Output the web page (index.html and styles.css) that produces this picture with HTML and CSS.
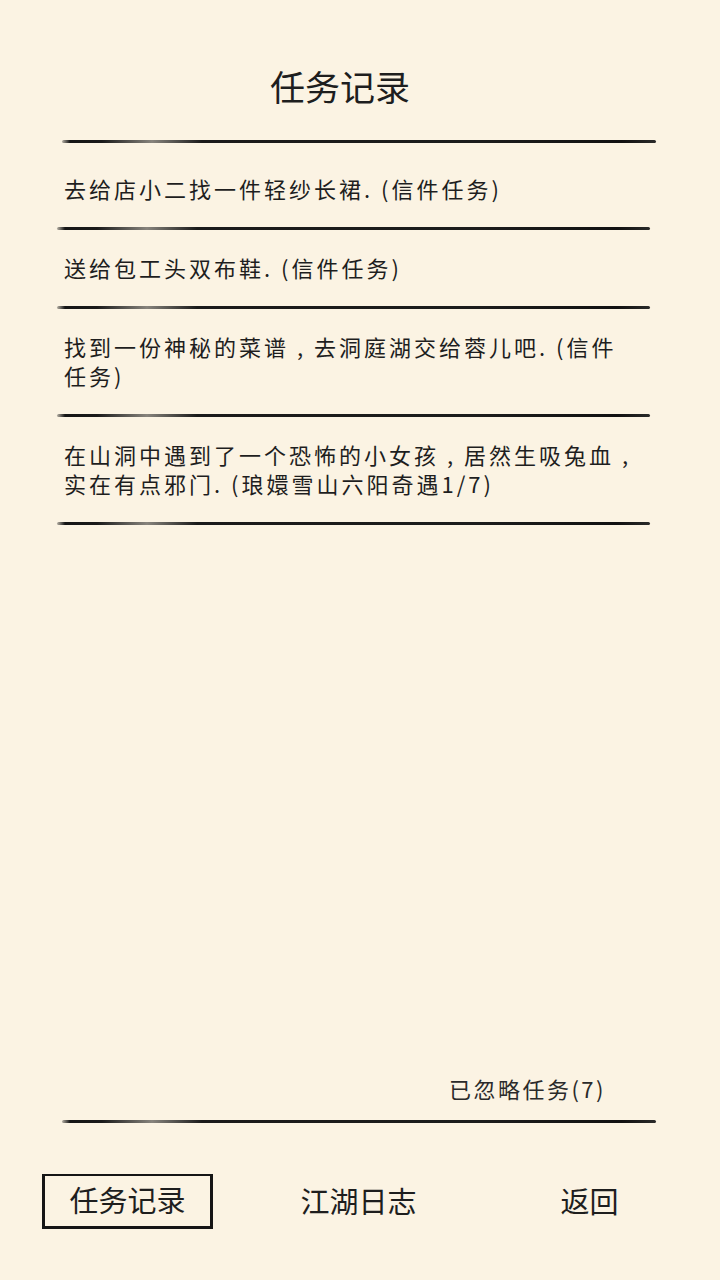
FILE: index.html
```html
<!DOCTYPE html>
<html lang="zh-CN">
<head>
    <meta charset="UTF-8">
    <meta name="viewport" content="width=device-width, initial-scale=1.0">
    <title>任务记录</title>
    <link rel="stylesheet" href="styles.css">
</head>
<body>
    <div class="screen">
        <h1 class="title">任务记录</h1>
        <div class="brush brush-wide"></div>

        <ul class="quests">
            <li class="quest">去给店小二找一件轻纱长裙. (信件任务)</li>
            <li class="brush"></li>
            <li class="quest">送给包工头双布鞋. (信件任务)</li>
            <li class="brush"></li>
            <li class="quest">找到一份神秘的菜谱 , 去洞庭湖交给蓉儿吧. (信件任务)</li>
            <li class="brush"></li>
            <li class="quest">在山洞中遇到了一个恐怖的小女孩 , 居然生吸兔血 , 实在有点邪门. (琅嬛雪山六阳奇遇1/7)</li>
            <li class="brush"></li>
        </ul>

        <div class="ignored">已忽略任务(7)</div>
        <div class="brush brush-wide"></div>

        <nav class="tabs">
            <button class="tab active">任务记录</button>
            <button class="tab">江湖日志</button>
            <button class="tab">返回</button>
        </nav>
    </div>
</body>
</html>
```

FILE: styles.css
```css
/* Reset and base styles */
* {
    box-sizing: border-box;
    margin: 0;
    padding: 0;
}

body {
    background-color: #fbf3e3;
    color: #1e1e1e;
    font-family: 'Noto Sans CJK SC', 'Noto Sans', sans-serif;
}

.screen {
    width: 720px;
    height: 1280px;
    display: flex;
    flex-direction: column;
}

/* Header */
.title {
    font-size: 35px;
    font-weight: normal;
    line-height: 48px;
    text-align: center;
    margin: 62px 40px 0 0;
}

/* Ink brush divider */
.brush {
    list-style: none;
    height: 3px;
    margin-left: 57px;
    width: 593px;
    border-radius: 2px;
    background: linear-gradient(to right,
        rgba(20, 20, 20, 0.3) 0,
        #151515 8px,
        #1a1a1a 40px,
        rgba(40, 40, 40, 0.55) 90px,
        #1a1a1a 140px,
        #1c1c1c 420px,
        #111 560px,
        #2a2a2a 100%);
}

.brush-wide {
    margin-left: 62px;
    width: 594px;
}

.title + .brush {
    margin-top: 30px;
}

/* Quest list */
.quests {
    list-style: none;
    padding-top: 8px;
}

.quest {
    font-size: 22px;
    line-height: 29px;
    letter-spacing: 3px;
    padding: 23px 84px 24px 64px;
}

.ignored {
    margin-top: auto;
    font-size: 22px;
    line-height: 30px;
    letter-spacing: 2.5px;
    color: #2a2a2a;
    text-align: right;
    padding-right: 114px;
    margin-bottom: 17px;
}

/* Bottom tabs */
.tabs {
    display: flex;
    align-items: center;
    margin: 51px 0 51px 42px;
}

.tab {
    background: none;
    border: none;
    font-family: inherit;
    font-size: 29px;
    line-height: 40px;
    color: #1e1e1e;
    width: 171px;
    height: 55px;
    padding-bottom: 4px;
    text-align: center;
}

.tab.active {
    border: 3px solid #151515;
    border-top-width: 2px;
}

.tab + .tab {
    margin-left: 60px;
}
```
